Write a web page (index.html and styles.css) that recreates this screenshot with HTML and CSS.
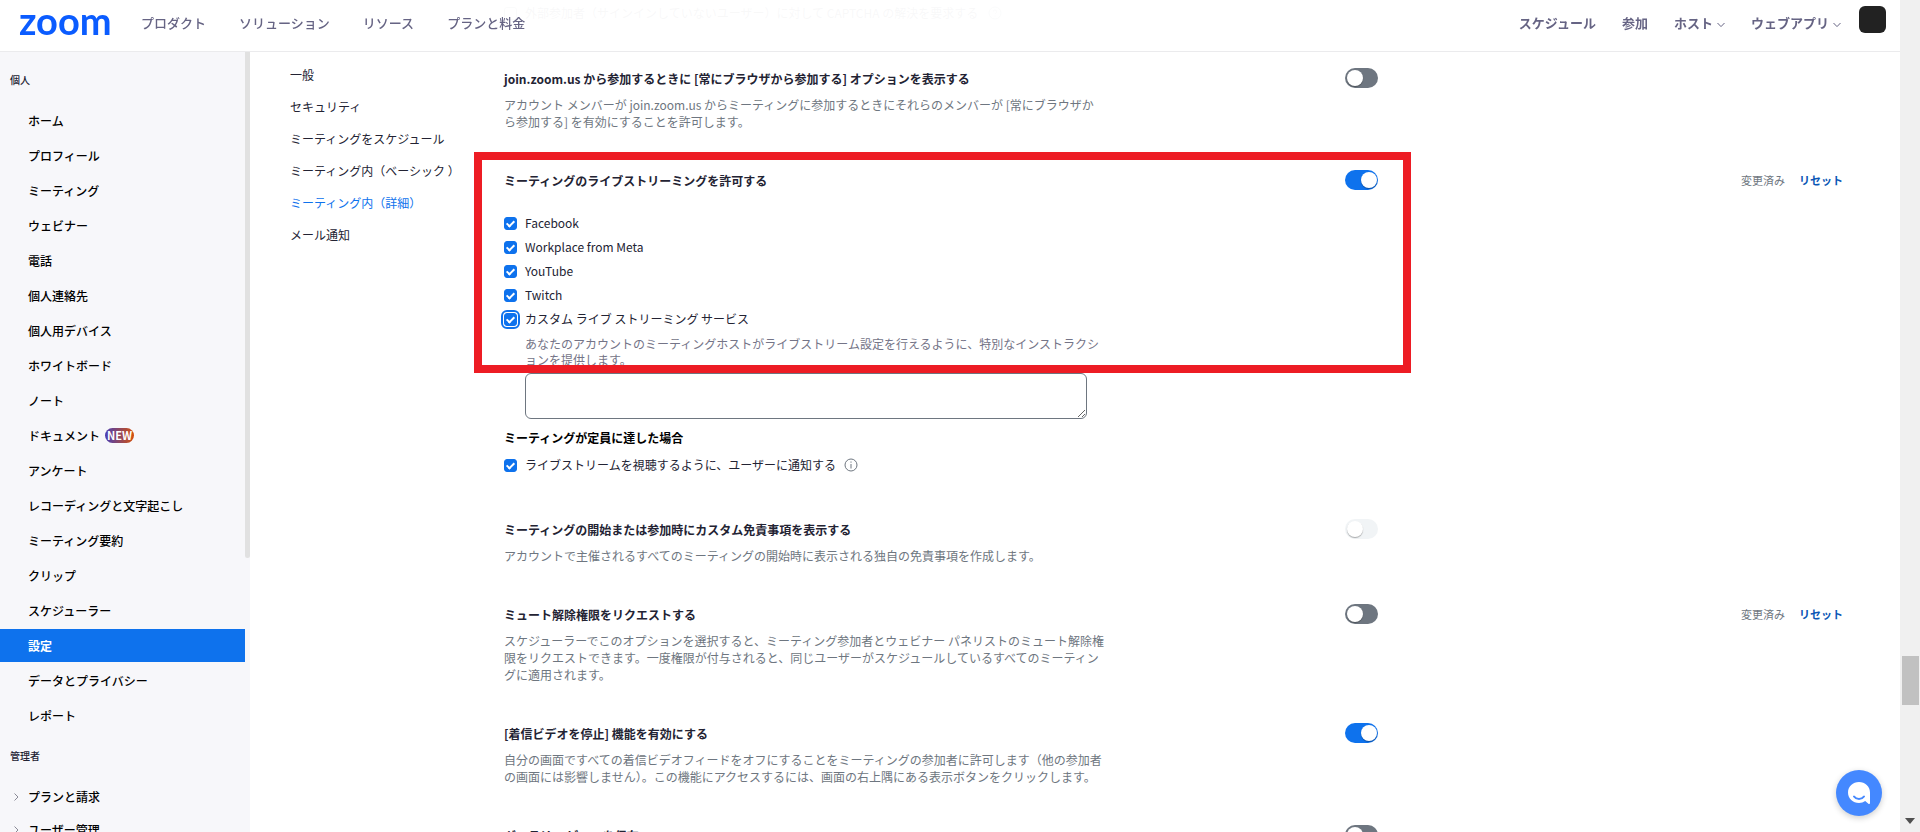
FILE: index.html
```html
<!DOCTYPE html>
<html lang="ja">
<head>
    <meta charset="UTF-8">
    <meta name="viewport" content="width=device-width, initial-scale=1.0">
    <title>設定 - Zoom</title>
    <link rel="stylesheet" href="styles.css">
</head>
<body>
    <header class="header">
        <a href="#" class="logo">zoom</a>
        <nav class="nav-left">
            <a href="#">プロダクト</a>
            <a href="#">ソリューション</a>
            <a href="#">リソース</a>
            <a href="#">プランと料金</a>
        </nav>
        <nav class="nav-right">
            <a href="#">スケジュール</a>
            <a href="#">参加</a>
            <a href="#">ホスト<svg class="caret" viewBox="0 0 8 6"><path d="M0.5 1l3.5 3.6L7.5 1"/></svg></a>
            <a href="#">ウェブアプリ<svg class="caret" viewBox="0 0 8 6"><path d="M0.5 1l3.5 3.6L7.5 1"/></svg></a>
        </nav>
        <button class="avatar" aria-label="アカウント"></button>
    </header>

    <div class="page">
        <aside class="sidebar">
            <h2>個人</h2>
            <ul class="menu">
                <li><a href="#">ホーム</a></li>
                <li><a href="#">プロフィール</a></li>
                <li><a href="#">ミーティング</a></li>
                <li><a href="#">ウェビナー</a></li>
                <li><a href="#">電話</a></li>
                <li><a href="#">個人連絡先</a></li>
                <li><a href="#">個人用デバイス</a></li>
                <li><a href="#">ホワイトボード</a></li>
                <li><a href="#">ノート</a></li>
                <li><a href="#">ドキュメント<span class="new">NEW</span></a></li>
                <li><a href="#">アンケート</a></li>
                <li><a href="#">レコーディングと文字起こし</a></li>
                <li><a href="#">ミーティング要約</a></li>
                <li><a href="#">クリップ</a></li>
                <li><a href="#">スケジューラー</a></li>
                <li><a href="#" class="active">設定</a></li>
                <li><a href="#">データとプライバシー</a></li>
                <li><a href="#">レポート</a></li>
            </ul>
            <h2>管理者</h2>
            <ul class="menu admin">
                <li><a href="#"><svg class="arrow" viewBox="0 0 5 8"><path d="M0.5 0.5L4 4L0.5 7.5"/></svg>プランと請求</a></li>
                <li><a href="#"><svg class="arrow" viewBox="0 0 5 8"><path d="M0.5 0.5L4 4L0.5 7.5"/></svg>ユーザー管理</a></li>
            </ul>
            <span class="sidebar-thumb"></span>
        </aside>

        <nav class="tabs">
            <a href="#">一般</a>
            <a href="#">セキュリティ</a>
            <a href="#">ミーティングをスケジュール</a>
            <a href="#">ミーティング内（ベーシック ）</a>
            <a href="#" class="current">ミーティング内（詳細）</a>
            <a href="#">メール通知</a>
        </nav>

        <main class="settings">
            <div class="under-header">
                <label class="check"><input type="checkbox">外部参加者（サインインしていないユーザー）に対して CAPTCHA の解決を要求する</label>
                <svg class="info" viewBox="0 0 14 14"><circle cx="7" cy="7" r="6"/><path d="M5.3 5.6a1.7 1.7 0 1 1 2.4 1.6q-.7.3-.7 1.1M7 9.6v1"/></svg>
            </div>

            <section class="setting">
                <div>
                    <h3><label for="s1">join.zoom.us から参加するときに [常にブラウザから参加する] オプションを表示する</label></h3>
                    <p>アカウント メンバーが join.zoom.us からミーティングに参加するときにそれらのメンバーが [常にブラウザか<br>ら参加する] を有効にすることを許可します。</p>
                </div>
                <input type="checkbox" class="switch" id="s1">
            </section>

            <section class="setting stream">
                <div>
                    <h3><label for="s2">ミーティングのライブストリーミングを許可する</label></h3>
                    <div class="services">
                        <label class="check"><input type="checkbox" checked>Facebook</label>
                        <label class="check"><input type="checkbox" checked>Workplace from Meta</label>
                        <label class="check"><input type="checkbox" checked>YouTube</label>
                        <label class="check"><input type="checkbox" checked>Twitch</label>
                        <label class="check focused"><input type="checkbox" checked>カスタム ライブ ストリーミング サービス</label>
                    </div>
                    <div class="custom">
                        <label for="instructions">あなたのアカウントのミーティングホストがライブストリーム設定を行えるように、特別なインストラクシ<br>ョンを提供します。</label>
                        <textarea id="instructions"></textarea>
                    </div>
                    <h4>ミーティングが定員に達した場合</h4>
                    <div class="notify">
                        <label class="check"><input type="checkbox" checked>ライブストリームを視聴するように、ユーザーに通知する</label>
                        <svg class="info" viewBox="0 0 14 14"><circle cx="7" cy="7" r="6"/><path d="M7 6v4.5M7 3.5v1.2"/></svg>
                    </div>
                </div>
                <input type="checkbox" class="switch" id="s2" checked>
                <div class="changed"><span>変更済み</span><a href="#">リセット</a></div>
                <div class="frame"></div>
            </section>

            <section class="setting">
                <div>
                    <h3><label for="s3">ミーティングの開始または参加時にカスタム免責事項を表示する</label></h3>
                    <p>アカウントで主催されるすべてのミーティングの開始時に表示される独自の免責事項を作成します。</p>
                </div>
                <input type="checkbox" class="switch" id="s3" disabled>
            </section>

            <section class="setting">
                <div>
                    <h3><label for="s4">ミュート解除権限をリクエストする</label></h3>
                    <p>スケジューラーでこのオプションを選択すると、ミーティング参加者とウェビナー パネリストのミュート解除権<br>限をリクエストできます。一度権限が付与されると、同じユーザーがスケジュールしているすべてのミーティン<br>グに適用されます。</p>
                </div>
                <input type="checkbox" class="switch" id="s4">
                <div class="changed"><span>変更済み</span><a href="#">リセット</a></div>
            </section>

            <section class="setting">
                <div>
                    <h3><label for="s5">[着信ビデオを停止] 機能を有効にする</label></h3>
                    <p>自分の画面ですべての着信ビデオフィードをオフにすることをミーティングの参加者に許可します（他の参加者<br>の画面には影響しません）。この機能にアクセスするには、画面の右上隅にある表示ボタンをクリックします。</p>
                </div>
                <input type="checkbox" class="switch" id="s5" checked>
            </section>

            <section class="setting">
                <div>
                    <h3><label for="s6">ギャラリー ビューを保存</label></h3>
                </div>
                <input type="checkbox" class="switch" id="s6">
            </section>
        </main>

        <div class="scrollbar">
            <span class="thumb"></span>
            <svg class="down" viewBox="0 0 10 6"><path d="M0 0h10L5 6z"/></svg>
        </div>
    </div>

    <button class="chat" aria-label="チャット">
        <svg viewBox="0 0 24 24">
            <path class="bubble" d="M12 1C6 1 1 5.500 1 11.500S6 22 12 22c2.400 0 4.500-.600 6.200-1.900l3.200 2.600c.6.500 1.600.1 1.600-.800V11.500C23 5.500 18 1 12 1z"/>
            <path class="smile" d="M7 15.500c1.300 1.800 3 2.500 5 2.500s3.700-.700 5-2.500"/>
        </svg>
    </button>
</body>
</html>
```
FILE: styles.css
```css
*, *::before, *::after { box-sizing: border-box; }
body { margin: 0; height: 100vh; overflow: hidden; background: #fff; color: #232333; font-family: "Noto Sans CJK JP", sans-serif; font-size: 12px; line-height: 16px; }
a { color: inherit; text-decoration: none; }
h2, h3, h4, p, ul { margin: 0; padding: 0; }
ul { list-style: none; }
button { border: none; padding: 0; cursor: pointer; }

/* header */
.header { position: fixed; top: 0; left: 0; right: 20px; z-index: 2; display: flex; align-items: center; height: 52px; padding: 0 14px 6px 19px; background: rgba(255, 255, 255, 0.97); border-bottom: 1px solid #ebebed; white-space: nowrap; }
.logo { width: 122px; color: #0b5cff; font-family: Lato, sans-serif; font-size: 38px; font-weight: bold; line-height: 40px; padding-bottom: 6px; }
.nav-left { display: flex; gap: 33px; color: #666484; font-size: 13px; font-weight: 500; }
.nav-right { display: flex; gap: 26px; margin-left: auto; color: #666484; font-size: 13px; font-weight: bold; }
.caret { width: 8px; height: 6px; margin-left: 4px; fill: none; stroke: #666484; }
.avatar { width: 27px; height: 27px; margin: 0 0 6px 18px; border-radius: 6px; background: #222; }

.page { display: flex; height: 100%; }

/* left menu */
.sidebar { position: relative; flex: none; width: 250px; padding: 72px 5px 0 0; overflow: hidden; background: #f7f7fa; }
.sidebar h2 { padding-left: 10px; font-size: 10px; font-weight: 500; line-height: 16px; }
.menu { display: flex; flex-direction: column; gap: 2px; padding: 16px 0; color: #000; font-weight: 500; }
.menu a { display: flex; align-items: center; height: 33px; padding-left: 28px; }
.menu .active { background: #0e72ed; color: #fff; font-weight: bold; }
.admin { gap: 0; }
.admin a { padding-left: 14px; }
.arrow { width: 5px; height: 8px; margin-right: 9px; fill: none; stroke: #8a8a96; }
.new { margin-left: 5px; width: 29px; height: 15px; border-radius: 8px; background: linear-gradient(90deg, #4a3fb5, #d4500c); color: #fff; font-size: 11px; font-weight: bold; line-height: 15px; text-align: center; }
.sidebar-thumb { position: absolute; top: 52px; right: 0; width: 5px; height: 506px; border-radius: 0 0 3px 3px; background: #e1e1e1; }

/* settings tabs */
.tabs { flex: none; display: flex; flex-direction: column; gap: 16px; width: 254px; padding: 67px 0 0 40px; white-space: nowrap; }
.tabs .current { color: #0e72ed; }

/* settings list */
.settings { flex: 1; min-width: 0; padding-top: 5px; white-space: nowrap; }
.under-header { display: flex; align-items: center; gap: 10px; height: 16px; margin-bottom: 47px; }
.setting { position: relative; display: grid; grid-template-columns: 841fr 396fr 159fr; align-items: start; margin-bottom: 40px; }
.setting > div:first-child { padding-top: 3px; }
.setting h3, .setting h4 { font-size: 12px; font-weight: bold; line-height: 16px; }
.setting p { margin-top: 9px; color: #6e7680; line-height: 17px; }
.stream { margin-bottom: 46px; }

.services { display: flex; flex-direction: column; gap: 8px; margin-top: 26px; }
.check { display: flex; align-items: center; gap: 8px; height: 16px; }
.check input { appearance: none; position: relative; width: 13px; height: 13px; margin: 0; border: 1px solid #6e7680; border-radius: 3px; }
.check input:checked { border-color: #0e72ed; background: #0e72ed; }
.check input:checked::after { content: ""; position: absolute; left: 3px; top: 1px; width: 5px; height: 8px; border: solid #fff; border-width: 0 2px 2px 0; transform: rotate(45deg); }
.focused input { outline: 2px solid #0e72ed; outline-offset: 1px; }
.custom { padding: 9px 0 0 21px; color: #747487; }
.custom label { display: block; margin-bottom: 5px; }
.custom textarea { display: block; width: 562px; height: 46px; border: 1px solid #6e7680; border-radius: 6px; }
.setting h4 { margin-top: 11px; color: #000; }
.notify { display: flex; align-items: center; gap: 8px; margin-top: 11px; }
.info { width: 14px; height: 14px; fill: none; stroke: #6e7680; }

.switch { appearance: none; position: relative; width: 33px; height: 20px; margin: 0; border-radius: 10px; background: #6e7680; }
.switch::before { content: ""; position: absolute; left: 2px; top: 2px; width: 16px; height: 16px; border-radius: 50%; background: #fff; box-shadow: 0 1px 1px rgba(0, 0, 0, 0.3); }
.switch:checked { background: #0e72ed; }
.switch:checked::before { left: 16px; }
.switch:disabled { background: #f1f4f6; }

.changed { display: flex; gap: 14px; padding-top: 2px; color: #6e7680; font-size: 11px; }
.changed a { color: #0956b5; font-weight: bold; }
.frame { position: absolute; top: -18px; left: -30px; right: 35%; height: 221px; border: 8px solid #ed1c24; pointer-events: none; }

/* page scrollbar */
.scrollbar { flex: none; display: flex; flex-direction: column; align-items: center; width: 20px; padding: 656px 0 8px; background: #f0f0f0; }
.thumb { width: 17px; height: 49px; background: #c1c1c1; }
.down { width: 10px; height: 6px; margin-top: auto; fill: #505050; }

.chat { position: fixed; right: 38px; bottom: 16px; z-index: 2; display: grid; place-items: center; width: 46px; height: 46px; border-radius: 50%; background: #4488ff; box-shadow: 0 2px 6px rgba(0, 0, 0, 0.2); }
.chat svg { width: 24px; height: 24px; }
.bubble { fill: #fff; }
.smile { fill: none; stroke: #4488ff; stroke-width: 2; stroke-linecap: round; }
```
